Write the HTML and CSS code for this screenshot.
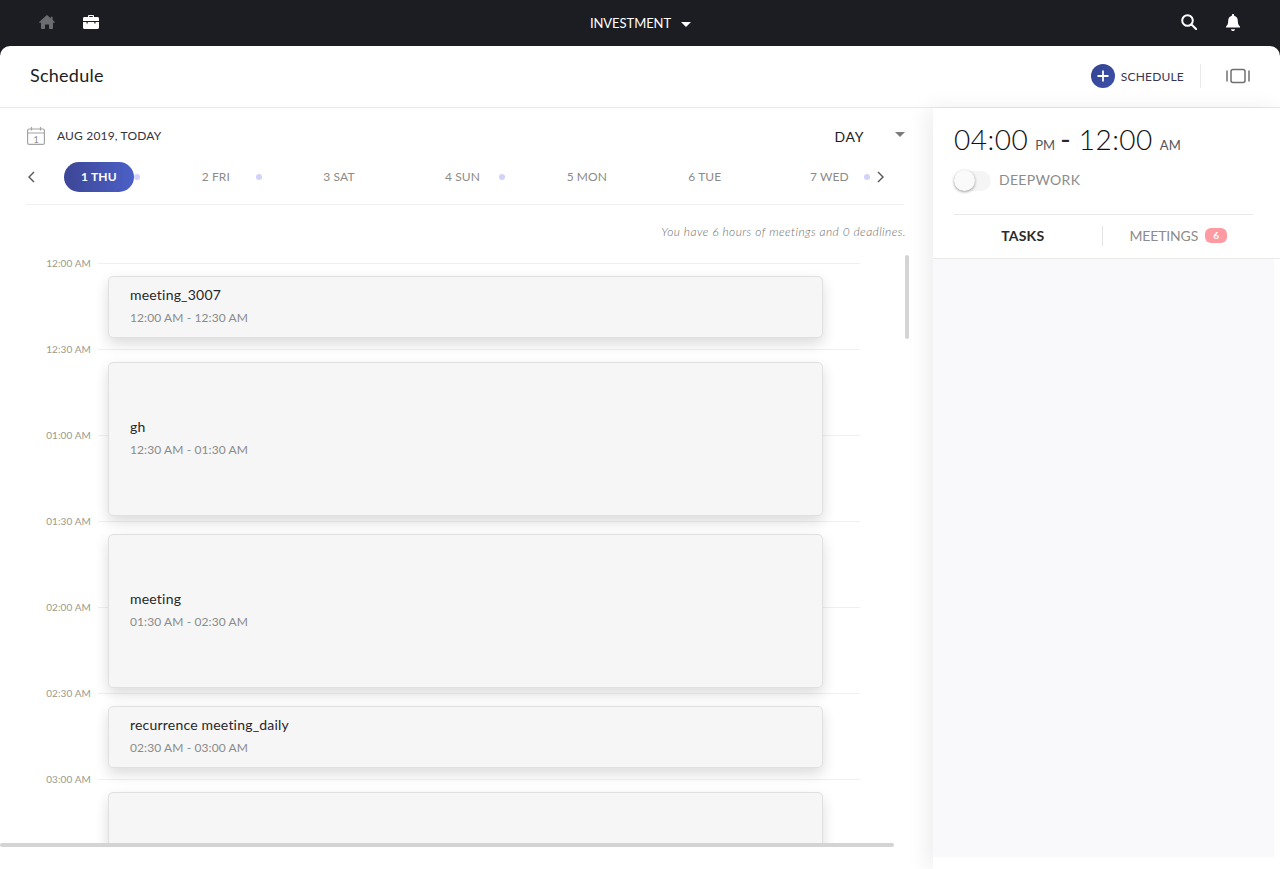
FILE: index.html
```html
<!DOCTYPE html>
<html lang="en">
<head>
<meta charset="utf-8">
<title>Schedule</title>
<link rel="stylesheet" href="styles.css">
</head>
<body>
<nav class="topbar">
  <div class="nav-left">
    <svg class="icon-home" viewBox="0 0 16 14" width="16" height="14"><path d="M8 .3c-.3 0-.5.1-.7.3L.4 6.800C0 7.200.2 7.800.8 7.800H2v5.200c0 .6.400 1 1 1h3V9.500h4V14h3c.6 0 1-.4 1-1V7.800h1.200c.6 0 .8-.6.4-1L13.600 5V1.700h-1.800v1.700L8.700.6C8.500.4 8.300.3 8 .3z" fill="#6b6c70"/></svg>
    <svg class="icon-brief" viewBox="0 0 16 14" width="16" height="14"><path d="M5 2V1.200C5 .5 5.500 0 6.200 0h3.600C10.500 0 11 .5 11 1.200V2h3.500C15.400 2 16 2.600 16 3.500V6H0V3.500C0 2.600.6 2 1.500 2H5zm1.200 0h3.600V1.100H6.200V2zM0 7h3.500v1.400h1.200V7h6.600v1.400h1.200V7H16v5.500c0 .9-.6 1.500-1.500 1.500h-13C.6 14 0 13.400 0 12.500V7z" fill="#fff"/></svg>
  </div>
  <div class="nav-title"><span>INVESTMENT</span><i class="caret caret-white"></i></div>
  <div class="nav-right">
    <svg viewBox="0 0 16 16" width="16" height="16" fill="none" stroke="#fff" stroke-width="2"><circle cx="6.500" cy="6.500" r="5.300"/><path d="M10.500 10.500 15.500 15.500" stroke-linecap="round"/></svg>
    <svg class="icon-bell" viewBox="0 0 14 17" width="14" height="17"><path d="M7 0c.7 0 1.100.5 1.100 1.100v.6c2.400.5 3.700 2.500 3.700 5 0 3 .7 4.200 2.200 5.800v1H0v-1c1.500-1.600 2.200-2.800 2.200-5.800 0-2.500 1.300-4.500 3.700-5v-.6C5.900.5 6.300 0 7 0zM5 15.200h4C9 16.300 8.100 17 7 17s-2-.7-2-1.800z" fill="#fff"/></svg>
  </div>
</nav>
<main class="sheet">
  <header class="sheet-head">
    <h1 class="sheet-title">Schedule</h1>
    <div class="head-actions">
      <button class="add-btn" type="button">
        <span class="add-circle"><svg viewBox="0 0 12 12" width="12" height="12"><path d="M6 .5v11M.5 6h11" stroke="#fff" stroke-width="1.800" fill="none"/></svg></span>
        <span class="add-label">SCHEDULE</span>
      </button>
      <span class="head-divider"></span>
      <svg class="icon-carousel" viewBox="0 0 24 16" width="24" height="16" fill="none" stroke="#6f6f6f" stroke-width="1.500"><rect x="5" y="1.500" width="14" height="13" rx="2"/><path d="M1 2.500v11M23 2.500v11"/></svg>
    </div>
  </header>
  <div class="columns">
    <section class="left">
      <div class="date-row">
        <svg class="icon-cal" viewBox="0 0 18 18" width="18" height="18"><g fill="none" stroke="#a3a3a3" stroke-width="1.200"><rect x=".6" y="2" width="16.800" height="15.400" rx="1.500"/><path d="M.6 6h16.800M4.500 0v3.500M13.500 0v3.500"/></g><text x="9" y="15.500" class="cal-num" text-anchor="middle">1</text></svg>
        <span class="date-label">AUG 2019, TODAY</span>
        <span class="view-select">DAY</span>
        <i class="caret caret-grey"></i>
      </div>
      <div class="week-row">
        <svg class="chev chev-prev" viewBox="0 0 7 12" width="7" height="12" fill="none" stroke="#555" stroke-width="1.400"><path d="M6 1 1 6l5 5"/></svg>
        <div class="days">
          <div class="day"><span class="day-label day-active">1 THU</span><i class="dot"></i></div>
          <div class="day"><span class="day-label">2 FRI</span><i class="dot"></i></div>
          <div class="day"><span class="day-label">3 SAT</span></div>
          <div class="day"><span class="day-label">4 SUN</span><i class="dot"></i></div>
          <div class="day"><span class="day-label">5 MON</span></div>
          <div class="day"><span class="day-label">6 TUE</span></div>
          <div class="day"><span class="day-label">7 WED</span><i class="dot"></i></div>
        </div>
        <svg class="chev chev-next" viewBox="0 0 7 12" width="7" height="12" fill="none" stroke="#555" stroke-width="1.400"><path d="M1 1l5 5-5 5"/></svg>
      </div>
      <p class="notice">You have 6 hours of meetings and 0 deadlines.</p>
      <div class="scroller">
        <div class="timeline">
          <div class="slot s1"><span class="slot-time">12:00 AM</span><span class="slot-line"></span></div>
          <div class="slot s2"><span class="slot-time">12:30 AM</span><span class="slot-line"></span></div>
          <div class="slot s3"><span class="slot-time">01:00 AM</span><span class="slot-line"></span></div>
          <div class="slot s4"><span class="slot-time">01:30 AM</span><span class="slot-line"></span></div>
          <div class="slot s5"><span class="slot-time">02:00 AM</span><span class="slot-line"></span></div>
          <div class="slot s6"><span class="slot-time">02:30 AM</span><span class="slot-line"></span></div>
          <div class="slot s7"><span class="slot-time">03:00 AM</span><span class="slot-line"></span></div>
          <article class="event e1 short"><h3>meeting_3007</h3><p>12:00 AM - 12:30 AM</p></article>
          <article class="event e2 tall"><h3>gh</h3><p>12:30 AM - 01:30 AM</p></article>
          <article class="event e3 tall"><h3>meeting</h3><p>01:30 AM - 02:30 AM</p></article>
          <article class="event e4 short"><h3>recurrence meeting_daily</h3><p>02:30 AM - 03:00 AM</p></article>
          <article class="event e5 tall"></article>
        </div>
        <span class="vbar"></span>
        <span class="hbar"></span>
      </div>
    </section>
    <aside class="right">
      <div class="right-top">
        <div class="clock"><span class="clock-big">04:00</span><span class="clock-small">PM</span><span class="clock-dash">-</span><span class="clock-big">12:00</span><span class="clock-small">AM</span></div>
        <div class="toggle-row"><span class="toggle"><i class="knob"></i></span><span class="toggle-label">DEEPWORK</span></div>
        <div class="tabs">
          <div class="tab tab-active">TASKS</div>
          <div class="tab"><span class="tab-text">MEETINGS</span><span class="badge">6</span></div>
        </div>
      </div>
      <div class="right-body"></div>
    </aside>
  </div>
</main>
</body>
</html>
```
FILE: styles.css
```css
* { box-sizing: border-box; }
html, body { margin: 0; height: 869px; overflow: hidden; }
body { background: #1c1d22; font-family: Lato, "Noto Sans", sans-serif; color: #1c1d22; display: flex; flex-direction: column; }
h1, h3, p { margin: 0; font-weight: 400; }

.topbar { height: 46px; flex: none; display: grid; grid-template-columns: 1fr auto 1fr; align-items: center; padding: 0 39px; }
.nav-left { display: flex; gap: 28px; align-items: center; }
.nav-right { display: flex; gap: 29px; align-items: center; justify-self: end; margin: -2px 1px 0 0; }
.nav-left svg { margin-top: -2px; }
.nav-title { display: flex; align-items: center; gap: 10px; color: #fff; font-size: 13px; letter-spacing: -.06px; margin-left: 1px; }
.caret { display: block; width: 0; height: 0; border-left: 5px solid transparent; border-right: 5px solid transparent; }
.caret-white { border-top: 5px solid #fff; margin-top: 2px; }
.caret-grey { border-top: 5px solid #7b7b7b; margin: -3px 0 0 30px; }

.sheet { flex: 1; background: #fff; border-radius: 10px 10px 0 0; overflow: hidden; display: flex; flex-direction: column; min-height: 0; }
.sheet-head { height: 62px; flex: none; border-bottom: 1px solid #e9e9e9; display: flex; align-items: center; justify-content: space-between; padding: 0 30px 1px; }
.sheet-title { font-size: 18px; color: #1c1d22; letter-spacing: .25px; margin-top: -2px; }
.head-actions { display: flex; align-items: center; }
.add-btn { display: flex; align-items: center; gap: 6px; background: none; border: 0; padding: 0; font: inherit; }
.add-circle { width: 24px; height: 24px; border-radius: 50%; background: linear-gradient(135deg, #33458f, #3d50ad); display: flex; align-items: center; justify-content: center; }
.add-label { font-size: 12px; color: #3a3550; letter-spacing: .2px; }
.head-divider { width: 1px; height: 24px; background: #e8e8e8; margin: 0 25px 0 16px; }

.columns { flex: 1; display: flex; min-height: 0; }
.left { width: 933px; flex: none; display: flex; flex-direction: column; min-height: 0; }
.date-row { display: flex; align-items: center; height: 54px; padding: 1px 28px 0 27px; }
.icon-cal { flex: none; }
.cal-num { font: 9px Lato, sans-serif; fill: #8c8c8c; }
.date-label { font-size: 12px; margin-left: 12px; color: #33333b; letter-spacing: .17px; }
.view-select { margin: 1px 0 0 auto; font-size: 14px; color: #1c1d22; letter-spacing: .6px; }
.date-row .caret-grey { margin-left: 31px; }

.week-row { display: flex; align-items: center; height: 43px; margin: 0 28px 0 26px; padding: 0 0 13px 2px; border-bottom: 1px solid #f0f0f0; width: 878px; }
.chev-prev { flex: none; margin-right: 29px; }
.days { display: grid; grid-template-columns: repeat(6, 121.67px) 76px; flex: none; }
.day { display: flex; align-items: center; height: 30px; }
.day-label { display: block; width: 70px; padding-left: 16px; font-size: 12px; color: #8b8b8b; white-space: nowrap; line-height: 30px; letter-spacing: .1px; }
.day-active { height: 30px; padding-left: 17px; border-radius: 15px; background: linear-gradient(90deg, #3d4696, #4b60c6); color: #fff; font-weight: 700; letter-spacing: .2px; }
.dot { width: 6px; height: 6px; border-radius: 50%; background: #d3d2fa; flex: none; }
.day:last-child .dot { margin-left: 1px; }
.chev-next { flex: none; margin-left: 7px; }

.notice { font-size: 12px; font-style: italic; font-weight: 300; color: #6e6e6e; text-align: right; padding-right: 27px; height: 24px; margin-top: 20px; line-height: 14px; flex: none; letter-spacing: .42px; }

.scroller { flex: 1; position: relative; min-height: 0; overflow: hidden; }
.timeline { display: grid; grid-template-columns: 108px 715px; grid-template-rows: repeat(7, 86px); height: 595px; margin-top: -1px; overflow: hidden; padding-top: 15px; width: 894px; }
.slot { grid-column: 1 / -1; display: flex; align-items: flex-start; height: 86px; }
.s1 { grid-row: 1; } .s2 { grid-row: 2; } .s3 { grid-row: 3; } .s4 { grid-row: 4; } .s5 { grid-row: 5; } .s6 { grid-row: 6; } .s7 { grid-row: 7; }
.slot-time { width: 91px; flex: none; font-size: 10px; line-height: 14px; margin-top: -7px; text-align: right; color: #9a9a8c; letter-spacing: .1px; }
.slot-line { width: 762px; height: 1px; margin-left: 7px; background: #f0f0f0; flex: none; }

.event { grid-column: 2; margin-top: 13px; position: relative; background: #f6f6f6; border: 1px solid #e0e0e0; border-radius: 5px; box-shadow: 0 6px 14px rgba(0, 0, 0, .14); padding: 0 21px 2px; display: flex; flex-direction: column; justify-content: center; align-self: start; }
.short { height: 62px; }
.tall { height: 154px; }
.e1 { grid-row: 1; } .e2 { grid-row: 2 / span 2; } .e3 { grid-row: 4 / span 2; } .e4 { grid-row: 6; } .e5 { grid-row: 7; }
.event h3 { font-size: 14px; line-height: 18px; color: #26262b; letter-spacing: .2px; }
.event p { font-size: 12px; line-height: 16px; margin-top: 6px; color: #8b8b8b; letter-spacing: .1px; }

.vbar { position: absolute; left: 905px; top: 6px; width: 4px; height: 84px; border-radius: 2px; background: #d4d4d4; }
.hbar { position: absolute; left: 0; top: 594px; width: 894px; height: 4px; border-radius: 2px; background: #d4d4d4; }

.right { flex: 1; min-width: 0; display: flex; flex-direction: column; box-shadow: -6px 0 20px rgba(0, 0, 0, .07); position: relative; background: #fff; padding-bottom: 12px; }
.right-top { flex: none; height: 151px; border-bottom: 1px solid #e9e9e9; padding: 14px 27px 0 21px; }
.clock { display: flex; align-items: baseline; height: 38px; color: #111114; }
.clock-big { font-size: 28px; font-weight: 300; letter-spacing: .5px; }
.clock-small { font-size: 13px; margin-left: 7px; color: #55555c; letter-spacing: .1px; }
.clock-dash { font-size: 28px; margin: 0 8px 0 5px; color: #26262b; }
.clock-small:last-child { margin-left: 7px; }
.toggle-row { display: flex; align-items: center; gap: 8px; margin-top: 11px; height: 20px; }
.toggle { width: 37px; height: 20px; border-radius: 10px; background: #f5f5f5; position: relative; display: block; flex: none; }
.knob { position: absolute; left: 0; top: -1px; width: 21px; height: 21px; border-radius: 50%; background: #fafafa; box-shadow: 0 1px 3px rgba(0, 0, 0, .4); }
.toggle-label { font-size: 14px; color: #8c8c8c; letter-spacing: .3px; margin-bottom: 3px; }
.tabs { display: flex; border-top: 1px solid #e9e9e9; margin-top: 23px; height: 42px; align-items: center; }
.tab { width: 150px; height: 20px; font-size: 14px; display: flex; align-items: center; justify-content: center; color: #8c8c8c; gap: 7px; }
.tab-active { color: #2b2b30; font-weight: 700; border-right: 1px solid #e3e3e3; padding-right: 11px; letter-spacing: .2px; }
.tab + .tab { justify-content: flex-start; padding-left: 26px; }
.tab-text { letter-spacing: -.15px; }
.badge { width: 22px; height: 15px; border-radius: 6px; background: #fd9aa2; color: #fff; font-size: 10px; font-weight: 700; text-align: center; line-height: 15px; }
.right-body { flex: 1; background: #f9f9fb; margin-right: 6px; }
```
